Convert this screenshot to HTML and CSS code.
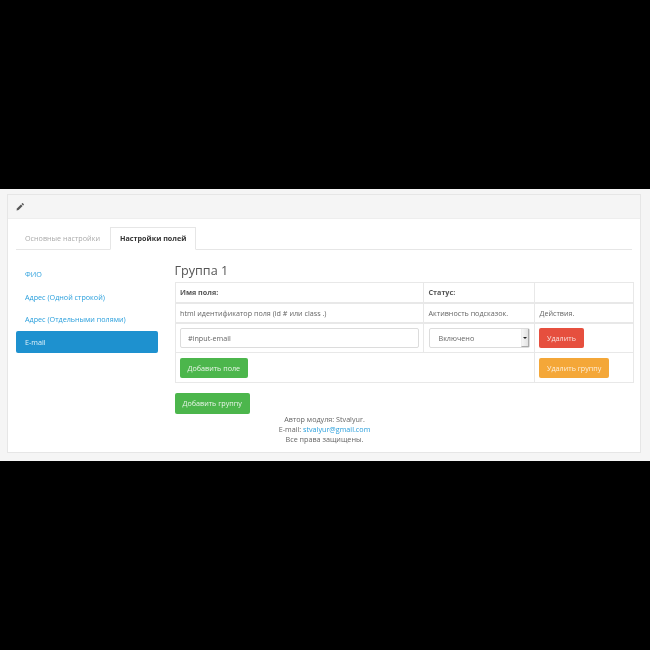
FILE: index.html
```html
<!DOCTYPE html>
<html lang="ru">
<head>
<meta charset="utf-8">
<title>Настройки полей</title>
<link rel="stylesheet" href="styles.css">
</head>
<body>
<div class="page">
  <div class="panel">
    <div class="panel-heading">
      <svg class="pencil" viewBox="0 0 10 10" width="8" height="8"><path d="M0.6 9.4l0.6-2.6 5-5 2 2-5 5z" fill="#555"/><path d="M6.9 1.1l0.7-0.7a0.7 0.7 0 0 1 1 0l1 1a0.7 0.7 0 0 1 0 1l-0.7 0.7z" fill="#555"/></svg>
    </div>
    <div class="panel-body">
      <ul class="tabs">
        <li class="tab">Основные настройки</li>
        <li class="tab active">Настройки полей</li>
      </ul>
      <div class="columns">
        <ul class="side">
          <li class="side-item">ФИО</li>
          <li class="side-item">Адрес (Одной строкой)</li>
          <li class="side-item">Адрес (Отдельными полями)</li>
          <li class="side-item current">E-mail</li>
        </ul>
        <div class="main">
          <h3 class="group-title">Группа 1</h3>
          <table class="fields">
            <colgroup><col class="c1"><col class="c2"><col class="c3"></colgroup>
            <tr class="head"><th>Имя поля:</th><th>Статус:</th><th></th></tr>
            <tr class="sub"><td>html идентификатор поля (id # или class .)</td><td>Активность подсказок.</td><td>Действия.</td></tr>
            <tr class="ctl">
              <td><div class="input">#input-email</div></td>
              <td><div class="select"><span>Включено</span><i class="spin"><b></b></i></div></td>
              <td><span class="btn red">Удалить</span></td>
            </tr>
            <tr class="ctl last">
              <td colspan="2"><span class="btn green">Добавить поле</span></td>
              <td><span class="btn orange">Удалить группу</span></td>
            </tr>
          </table>
          <span class="btn green add-group">Добавить группу</span>
        </div>
      </div>
      <div class="credits">
        <div>Автор модуля: Stvalyur.</div>
        <div>E-mail: <a class="link">stvalyur@gmail.com</a></div>
        <div>Все права защищены.</div>
      </div>
    </div>
  </div>
</div>
</body>
</html>
```

FILE: styles.css
```css
* { box-sizing: border-box; }
html, body { margin: 0; height: 650px; background: #000; overflow: hidden; }
body { padding-top: 189px; font-family: "Open Sans", sans-serif; font-size: 7.2px; color: #666; }
.page { height: 272px; background: #f5f5f5; padding: 5px 9px 0 7px; }
.panel { height: 259px; background: #fff; border: 1px solid #e6e6e6; filter: blur(0.3px); }
.panel-heading { height: 24px; background: #f5f5f5; border-bottom: 1px solid #eee; padding: 8px 0 0 8px; }
.pencil { display: block; }
.panel-body { padding: 8px 8px 0; position: relative; }
.tabs { list-style: none; margin: 0; padding: 0; display: flex; height: 23px; border-bottom: 1px solid #e6e6e6; }
.tab { height: 23px; padding: 0 9px; line-height: 22px; color: #aaa; width: 94px; white-space: nowrap; }
.tab.active { width: 86px; background: #fff; border: 1px solid #e6e6e6; border-bottom-color: #fff; color: #333; font-weight: 700; line-height: 20px; }
.columns { display: flex; margin-top: 9px; }
.side { list-style: none; margin: 0; padding: 0; width: 142px; flex: none; margin-right: 16px; margin-top: 4px; }
.side-item { height: 22.6px; padding-left: 9px; line-height: 22px; color: #2a9fdc; white-space: nowrap; }
.side-item.current { height: 22px; line-height: 22px; background: #1e91cf; color: #dff1fa; border-radius: 2px; }
.main { width: 458px; }
.group-title { margin: 0 0 0 0.5px; height: 23px; padding-top: 2px; font-size: 12.6px; line-height: 19px; font-weight: 400; color: #555; }
.fields { border-collapse: collapse; width: 458px; table-layout: fixed; margin-left: 0.5px; }
.c1 { width: 248.5px; }
.c2 { width: 111px; }
.c3 { width: 98.5px; }
.fields th, .fields td { border: 1px solid #e8e8e8; padding: 0 4.5px; text-align: left; vertical-align: middle; white-space: nowrap; }
.fields th { color: #555; font-weight: 700; }
.head { height: 20px; }
.sub { height: 20px; }
.sub td { border-top-width: 2px; border-bottom-width: 2px; }
.ctl { height: 30px; }
.fields .ctl.last { height: 29.5px; }
.fields .last td { padding-top: 1px; }
.input { height: 20px; border: 1px solid #dcdcdc; border-radius: 2px; padding-left: 7px; line-height: 18px; color: #666; background: #fff; }
.select { height: 20px; width: 101px; border: 1px solid #dcdcdc; border-radius: 2px; padding-left: 9px; line-height: 19px; color: #666; background: #fff; position: relative; }
.spin { position: absolute; right: 0; top: 0; bottom: 0; width: 8px; background: linear-gradient(90deg, #f6f6f6, #e2e2e2); border-left: 1px solid #eee; border-right: 1px solid #aaa; border-bottom: 1px solid #aaa; }
.spin b { position: absolute; left: 1px; top: 8px; border: 2px solid transparent; border-top: 2px solid #222; border-bottom: 0; }
.btn { display: inline-block; height: 20px; line-height: 20px; padding: 0 8px; border-radius: 2px; color: #e8f5e8; vertical-align: middle; white-space: nowrap; }
.fields .btn { margin-left: -0.5px; }
.green { background: #4cb64c; }
.red { background: #e64f3e; color: #f9dfdb; }
.orange { background: #f4a738; color: #fdeed8; }
.add-group { display: block; width: 75px; height: 21px; line-height: 21px; margin: 10px 0 0 0.5px; }
.credits { position: absolute; left: 0; right: 0; top: 195px; text-align: center; line-height: 10px; color: #666; padding-left: 1px; }
.link { color: #2a9fdc; }
```
